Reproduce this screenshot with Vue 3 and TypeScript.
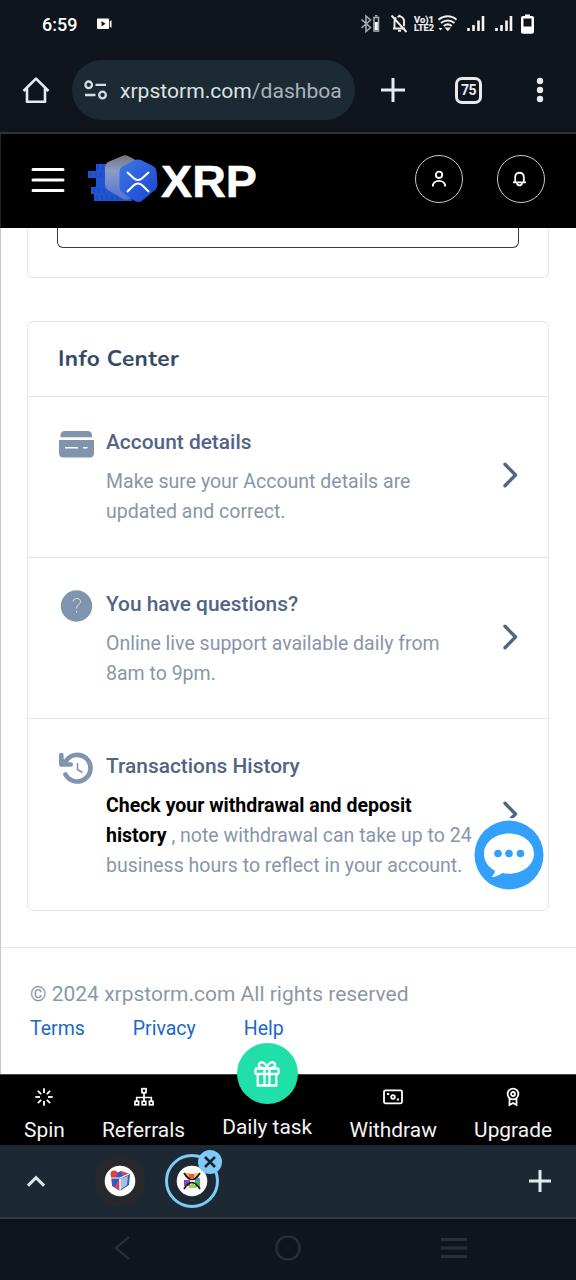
<script setup lang="ts">
interface InfoRow {
  icon: 'account' | 'question' | 'history'
  title: string
  strong: string[]
  lines: string[]
}

const rows: InfoRow[] = [
  { icon: 'account', title: 'Account details', strong: [], lines: ['Make sure your Account details are', 'updated and correct.'] },
  { icon: 'question', title: 'You have questions?', strong: [], lines: ['Online live support available daily from', '8am to 9pm.'] },
  {
    icon: 'history',
    title: 'Transactions History',
    strong: ['Check your withdrawal and deposit', 'history'],
    lines: ['', ' , note withdrawal can take up to 24', 'business hours to reflect in your account.'],
  },
]
const links: string[] = ['Terms', 'Privacy', 'Help']
const spokes: number[] = [0, 45, 90, 135, 180, 225, 270, 315]
</script>

<template>
  <div class="phone">
    <div class="status">
      <span class="clock">6:59</span>
      <svg class="cam" width="16" height="12" viewBox="0 0 16 12"><rect x="0" y="0.5" width="12" height="10.5" rx="1" fill="#fff" /><path d="M4.500 3l4 2.700-4 2.700z" fill="#10151d" /><path d="M12.800 3.200l1.700-1v7.600l-1.700-1z" fill="#fff" /></svg>
      <svg class="sysicons" width="180" height="24" viewBox="360 12 180 24" fill="none" stroke="#eee">
        <g stroke="#a5a8ac" stroke-width="1.600"><path d="M361.500 19.500l9 8-4.500 4V16l4.500 4-9 8" /><rect x="374" y="17.500" width="4.500" height="13.500" /><path d="M375 15.800h2.500" /></g>
        <path d="M376.300 22v8" stroke="#fff" stroke-width="3" />
        <g stroke-width="1.900"><path d="M391.500 15.500l15 16.500M393 28.500h12M394.500 28v-6.500c0-2 .5-3 1.500-4M397.500 16.800c3.500-1.300 6.500 1 6.500 4.500v5M399.500 14.800v2" /><path d="M398 30.800h3" /></g>
        <g fill="#eee" stroke="#eee" stroke-width=".2" font-family="Roboto, sans-serif" font-weight="700"><text x="414" y="22.800" font-size="9.500" textLength="20" lengthAdjust="spacingAndGlyphs">Vo)1</text><text x="414" y="31.300" font-size="9" textLength="20" lengthAdjust="spacingAndGlyphs">LTE2</text></g>
        <g stroke-width="2"><path d="M438.500 19.800c5.500-4.600 13-4.600 18 0M441 23c4-3.300 9.500-3.300 13.500 0M443.800 26c2.500-2 5.500-2 8 0" /></g>
        <path d="M444.500 27.500h6.500l-3.200 3.800zM438.500 28h4l-2 2.500z" fill="#eee" stroke="none" />
        <g stroke="#f5f5f5" stroke-width="2.600"><path d="M468.500 31v-3M473.500 31v-6M478.500 31v-10.500M483 31V16" /><path d="M496.500 31v-3M501.500 31v-6M506.500 31v-10.500M511 31V16" /></g>
        <path d="M525 14.500h5v1.500h2c1.200 0 2 .7 2 1.800v14c0 1.200-.8 2-2 2h-9c-1.200 0-2-.8-2-2v-14c0-1.100.8-1.800 2-1.800h2z" fill="#fff" stroke="none" /><rect x="523.500" y="18.500" width="8" height="8" fill="#10151d" stroke="none" />
      </svg>
    </div>

    <div class="toolbar">
      <svg class="home" width="28" height="28" viewBox="0 0 28 28" fill="none" stroke="#e8eaed" stroke-width="2.600"><path d="M1.500 15L14 2.600 26.500 15M5 12.500v13.300h18V12.500" stroke-linejoin="round" /></svg>
      <div class="url">
        <svg width="24" height="20" viewBox="0 0 24 20" fill="none" stroke="#d5dde0" stroke-width="2.300"><circle cx="4.700" cy="4.800" r="3.300" /><path d="M11.500 4.800H22M1 15h10.500" /><circle cx="18.500" cy="15" r="3.300" /></svg>
        <div class="address">xrpstorm.com<span>/dashboa</span></div>
      </div>
      <svg class="plus" width="24" height="24" viewBox="0 0 24 24" stroke="#e8eaed" stroke-width="3"><path d="M0 12h24M12 0v24" /></svg>
      <div class="count">75</div>
      <svg class="dots" width="8" height="26" viewBox="0 0 8 26" fill="#e8eaed"><circle cx="4" cy="4" r="3.200" /><circle cx="4" cy="13" r="3.200" /><circle cx="4" cy="22" r="3.200" /></svg>
    </div>

    <header class="site">
      <svg class="burger" width="34" height="26" viewBox="0 0 34 26" stroke="#fff" stroke-width="3" stroke-linecap="round"><path d="M2 2.500h30M2 13h30M2 23.500h30" /></svg>
      <svg class="brand" width="170" height="52" viewBox="88 153 170 52">
        <defs>
          <linearGradient id="coin" x1="0" y1="0" x2="1" y2="1"><stop offset="0" stop-color="#3c78e8" /><stop offset="1" stop-color="#1b43cf" /></linearGradient>
          <linearGradient id="ghost" x1="0" y1="0" x2="0" y2="1"><stop offset="0" stop-color="#77747a" /><stop offset=".35" stop-color="#8b9cc9" /><stop offset="1" stop-color="#5273cb" /></linearGradient>
        </defs>
        <g fill="#1f55d0"><path d="M96 163h18v7H96zM88 170h28v7H88zM96 177h20v9H96zM91 186h32v7H91zM94 193h38v7H94z" /></g>
        <path d="M98 164v5M103 164v5M91 171v5M96 171v5M101 171v5M94 187v5M99 187v5M104 187v5M97 194v5M102 194v5M107 194v5M112 194v5M117 194v5M122 194v5" stroke="#1a45b4" stroke-width="1" />
        <path d="M122 155q3-1.500 6 0l13 7q3 2 3 5v18q0 3-3 5l-12 8q-3 1.500-6 0l-15-9q-3-2-3-5v-18q0-3 3-5z" fill="url(#ghost)" />
        <path d="M134 159.500q4-2 8 0l11 5.500q3 1.500 3.500 5l1 13q0 4-3 6.500l-12 10q-4 3-8.500 0l-11-7.500q-3.500-2.500-3.500-6v-15q0-4 3.500-6z" fill="url(#coin)" />
        <path d="M127 171l6.500 6q4.500 4 9 0l6.500-6M127 191l6.500-6.500q4.500-4 9 0l6.500 6.500" fill="none" stroke="#fff" stroke-width="2.100" />
        <text x="161" y="196.300" font-family="Liberation Sans, Arial, sans-serif" font-weight="700" font-size="43.500" textLength="96" lengthAdjust="spacingAndGlyphs" fill="#fff" stroke="#fff" stroke-width=".5">XRP</text>
      </svg>
      <div class="round person"><svg width="16" height="18" viewBox="0 0 16 18" fill="none" stroke="#fff" stroke-width="1.800"><circle cx="8" cy="4.800" r="3.200" /><path d="M1.800 16.500c0-7.500 12.400-7.500 12.400 0" /></svg></div>
      <div class="round"><svg class="bell" width="16" height="18" viewBox="0 0 16 18" fill="none" stroke="#fff" stroke-width="1.800"><path d="M1 12.300h13M3.200 12V7c0-5.700 8.600-5.700 8.600 0v5M5 13c.5 3.200 4.500 3.200 5 0" /></svg></div>
    </header>

    <main class="page">
      <div class="prev"><div class="field"></div></div>
      <section class="panel">
        <h2>Info Center</h2>
        <div v-for="row in rows" :key="row.icon" class="row" :class="row.icon">
          <div class="ico">
            <svg v-if="row.icon === 'account'" width="36" height="28" viewBox="0 0 36 28" fill="#8094ae"><path d="M2.500 7.200V5.500Q2.500 1 7 1h22.500Q34 1 34 5.500v1.700zM1 10h35v13q0 4.500-4.500 4.500h-26Q1 27.500 1 23z" /><path d="M7 17.800h13M25 17.800h4.500" stroke="#fff" stroke-width="1.400" /></svg>
            <svg v-else-if="row.icon === 'question'" width="36" height="32" viewBox="0 0 36 32"><circle cx="18.500" cy="16" r="15.700" fill="#8094ae" /><path d="M15 11.500c.2-4 7.500-4 7.500 0 0 3.500-4 2.800-4 7M18.500 21v1.500" fill="none" stroke="#dfe6ee" stroke-width="1" /></svg>
            <svg v-else width="36" height="34" viewBox="0 0 36 34" fill="none" stroke="#8094ae"><path d="M7.500 23.500A13.300 13.300 0 1 0 8 10" stroke-width="4.700" stroke-linecap="round" /><path d="M3.300 4v9.500h9.500" stroke-width="4.600" stroke-linecap="round" stroke-linejoin="round" /><path d="M5 8v5h6z" fill="#8094ae" /><path d="M19.500 12v6.500l5 3" stroke-width="1.600" /></svg>
          </div>
          <div class="copy">
            <h3>{{ row.title }}</h3>
            <p v-for="(line, i) in row.lines" :key="i"><b v-if="row.strong[i]">{{ row.strong[i] }}</b>{{ line }}</p>
          </div>
          <svg class="chev" width="16" height="26" viewBox="0 0 16 26" fill="none" stroke="#526484" stroke-width="3.400"><path d="M3 2.300L13.500 13 3 23.700" stroke-linecap="round" stroke-linejoin="round" /></svg>
        </div>
      </section>
      <footer>
        <p>© 2024 xrpstorm.com All rights reserved</p>
        <nav><a v-for="l in links" :key="l">{{ l }}</a></nav>
      </footer>
      <div class="chat">
        <svg width="70" height="70" viewBox="0 0 70 70"><circle cx="35" cy="35" r="34.500" fill="#33a1fb" /><path d="M35 13.500c14 0 25 9 25 20.200s-11 20-25 20c-2.700 0-5-.2-7-.7-3 2.500-6 3.800-10.500 4 2-1.500 3.200-4 3.500-6.300C14 47 10 41 10 33.700c0-11.200 11-20.200 25-20.200z" fill="#fff" /><g fill="#33a1fb"><circle cx="24" cy="33.500" r="3.800" /><circle cx="35" cy="33.500" r="3.800" /><circle cx="46.500" cy="33.500" r="3.800" /></g></svg>
      </div>
    </main>

    <nav class="tabs">
      <div class="tab"><svg width="20" height="20" viewBox="0 0 20 20" stroke="#fff" stroke-width="1.800"><path v-for="a in spokes" :key="a" d="M10 1.300v4.700" :transform="`rotate(${a} 10 10)`" /></svg><span>Spin</span></div>
      <div class="tab"><svg width="20" height="20" viewBox="0 0 20 20" fill="none" stroke="#fff" stroke-width="1.700"><rect x="8" y="1.700" width="4" height="4" /><path d="M10 6v9M2.700 14.500v-4h14.600v4" /><rect x="1" y="14.300" width="3.600" height="3.500" /><rect x="8.200" y="14.300" width="3.600" height="3.500" /><rect x="15.400" y="14.300" width="3.600" height="3.500" /></svg><span>Referrals</span></div>
      <div class="tab daily">
        <div class="gift"><svg width="28" height="28" viewBox="0 0 28 28" fill="none" stroke="#fff" stroke-width="2.300"><rect x="2.500" y="8.500" width="23" height="5.500" rx="1" /><path d="M4.700 14v11.500h18.600V14M11.500 8.500v17M16.500 8.500v17M13.500 8C7 8.500 5 6 6.300 3.700 8 1 12 2 14 7c2-5 6-6 7.700-3.300C23 6 21 8.500 14.500 8" /></svg></div>
        <span>Daily task</span>
      </div>
      <div class="tab"><svg width="20" height="20" viewBox="0 0 20 20" fill="none" stroke="#fff" stroke-width="1.800"><rect x="1" y="3.300" width="18" height="13" rx="1.500" /><circle cx="10" cy="10" r="1.800" /><path d="M4 7h2.200M13.800 12.500H16" /></svg><span>Withdraw</span></div>
      <div class="tab"><svg width="20" height="20" viewBox="0 0 20 20" fill="none" stroke="#fff" stroke-width="1.800"><circle cx="10" cy="7" r="5.400" /><circle cx="10" cy="7" r="2" /><path d="M6.500 11.500V18l3.500-2 3.500 2v-6.500" /></svg><span>Upgrade</span></div>
    </nav>

    <div class="strip">
      <svg class="up" width="18" height="12" viewBox="0 0 18 12" fill="none" stroke="#dfe6ea" stroke-width="3"><path d="M1 10.700l8-8 8 8" /></svg>
      <svg class="fav1" width="52" height="52" viewBox="0 0 52 52"><circle cx="26" cy="26" r="25.500" fill="#27282c" /><circle cx="26" cy="26" r="15.300" fill="#fff" /><path d="M17 20l10-4 9 3-1 11-9 6-8-5z" fill="#3559b8" /><path d="M25 24l9-3-1 9-7 5z" fill="#a9bde0" /><path d="M20 32l5-7 1 11zM26 16l9 3-6 2z" fill="#d84559" /><circle cx="20" cy="19" r="3.500" fill="#e53b3b" /><path d="M17 23h9l9-4M26 24v12" stroke="#fff" stroke-width="1.200" fill="none" /></svg>
      <div class="active">
        <svg width="54" height="54" viewBox="0 0 54 54"><circle cx="27" cy="27" r="25.500" fill="none" stroke="#7ecbf7" stroke-width="3" /><circle cx="27" cy="27" r="15.300" fill="#fff" /><path d="M20 19h5v4h-5z" fill="#efb443" /><path d="M29 19h5v4h-5z" fill="#f2c66e" /><path d="M24 20h5v4h-5z" fill="#ef5a36" /><path d="M19 26h6v6h-6z" fill="#8e44ad" /><path d="M30 27h5v6h-5z" fill="#5caa4d" /><path d="M25 31l3-2 4 5h-9z" fill="#8ddb47" /><path d="M30 24h5v3h-5z" fill="#4b9bd5" /><path d="M19 19q8 13 16 0M19 35q8-13 16 0" fill="none" stroke="#161616" stroke-width="1.700" /></svg>
        <svg class="close" width="24" height="24" viewBox="0 0 24 24"><circle cx="12" cy="12" r="12" fill="#7ecbf7" /><path d="M7 7l10 10M17 7L7 17" stroke="#14232c" stroke-width="2.500" /></svg>
      </div>
      <svg class="add" width="22" height="22" viewBox="0 0 22 22" stroke="#e3ebef" stroke-width="3"><path d="M0 11h22M11 0v22" /></svg>
    </div>

    <div class="system">
      <svg width="16" height="24" viewBox="0 0 16 24"><path d="M15 1L2 12l13 11" /></svg>
      <svg class="circle" width="26" height="26" viewBox="0 0 26 26"><circle cx="13" cy="13" r="11.700" /></svg>
      <svg width="26" height="22" viewBox="0 0 26 22"><path d="M0 2.500h26M0 11h26M0 19.500h26" stroke-width="3" /></svg>
    </div>
  </div>
</template>

<style>
body { margin: 0; }
</style>

<style scoped>
* { box-sizing: border-box; }
svg { display: block; flex: none; }
p, h2, h3 { margin: 0; white-space: pre; }
.phone { width: 576px; height: 1280px; overflow: hidden; font-family: Roboto, "Liberation Sans", sans-serif; background: #fff; display: flex; flex-direction: column; }
.phone > * { flex: none; }
.status { height: 48px; background: #0f151d; color: #fff; display: flex; align-items: center; padding-left: 42px; }
.clock { width: 54px; font-size: 18px; font-weight: 500; padding-top: 1px; }
.cam { margin-left: 1px; }
.sysicons { margin-left: auto; margin-right: 36px; }
.toolbar { height: 86px; background: #0f151d; border-bottom: 2px solid #2d3439; display: flex; align-items: center; padding-left: 22px; }
.url { width: 283px; height: 60px; margin-left: 22px; background: #1c2a33; border-radius: 30px; display: flex; align-items: center; padding-left: 12px; }
.address { margin-left: 12px; white-space: nowrap; font-size: 21.100px; line-height: 30px; padding-top: 1px; color: #dce2e5; }
.address span { color: #a9b4ba; }
.plus { margin-left: 26px; }
.count { width: 27px; height: 27px; margin-left: 50px; border: 3px solid #e8eaed; border-radius: 7px; color: #e8eaed; font-size: 14px; letter-spacing: -.6px; font-weight: 700; line-height: 21px; text-align: center; }
.dots { margin-left: 54px; }
.site { height: 94px; background: #000; border-left: 1px solid #222; display: flex; align-items: center; padding: 0 31px 2px 30px; }
.brand { margin-left: 23px; }
.round { width: 48px; height: 48px; border: 1px solid #c9c9c9; border-radius: 50%; display: flex; align-items: center; justify-content: center; margin-left: 34px; margin-bottom: 2px; }
.bell { margin-right: 2px; }
.person { margin-left: auto; }
.page { height: 846px; border-left: 1px solid #c8c8c8; position: relative; }
.prev { height: 50px; width: 522px; margin-left: 26px; border: 1px solid #e4e6ea; border-top: 0; border-radius: 0 0 6px 6px; padding: 0 29px; }
.field { height: 20px; width: 462px; border: 1px solid #3a3a3a; border-top: 0; border-radius: 0 0 6px 6px; }
.panel { margin: 43px 0 0 26px; width: 522px; height: 590px; border: 1px solid #e2e5e9; border-radius: 6px; }
h2 { height: 74px; padding-left: 30px; font: 700 22.700px/74px Nunito, Lato, sans-serif; color: #364a63; letter-spacing: .4px; }
.row { border-top: 1px solid #e2e5e9; padding: 30px; display: flex; }
.question { padding: 31px 30px 29px; }
.history { padding: 32px 30px 28px; }
.ico { width: 48px; padding-top: 3px; }
.question .ico { padding-top: 1px; }
.history .ico { padding-top: 0; }
h3 { font-size: 20.900px; font-weight: 500; line-height: 30px; margin-bottom: 10px; color: #526484; }
.copy { flex: 1; }
.copy p { font-size: 19.500px; line-height: 30px; color: #8896a9; }
.copy b { color: #000; font-weight: 700; }
.chev { align-self: center; margin-top: -5px; }
footer { margin-top: 36px; border-top: 1px solid #e5e8ec; padding: 30px 0 0 29px; }
footer p { font-size: 21px; line-height: 32px; color: #8c97a8; }
footer nav { display: flex; gap: 48px; font-size: 19.500px; line-height: 38px; color: #1c68c8; }
.chat { position: absolute; left: 472px; top: 590px; width: 73px; height: 73px; padding: 2px 0 0 1px; background: #fff; }
.tabs { height: 71px; background: #000; color: #f4f4f4; display: flex; justify-content: space-between; padding: 0 24px; border-top: 1px solid #444; position: relative; }
.tab { display: flex; flex-direction: column; align-items: center; padding-top: 12px; font-size: 20.900px; white-space: nowrap; }
.tab span { line-height: 28px; margin-top: 9px; }
.daily { padding-top: 0; }
.gift { width: 61px; height: 61px; margin-top: -32px; border-radius: 50%; background: #20dfa9; display: flex; align-items: center; justify-content: center; }
.strip { height: 74px; background: #1c2932; border-bottom: 2px solid #323b41; display: flex; align-items: center; padding-left: 27px; }
.fav1 { margin-left: 49px; }
.active { margin-left: 19px; position: relative; }
.close { position: absolute; left: 33px; top: -4px; }
.add { margin-left: 310px; }
.system { height: 61px; background: #0f151d; display: flex; align-items: center; padding: 0 109px 4px 114px; justify-content: space-between; }
.system svg { fill: none; stroke: #2b3035; stroke-width: 2.200; }
.system .circle { margin-left: 4px; }
</style>
